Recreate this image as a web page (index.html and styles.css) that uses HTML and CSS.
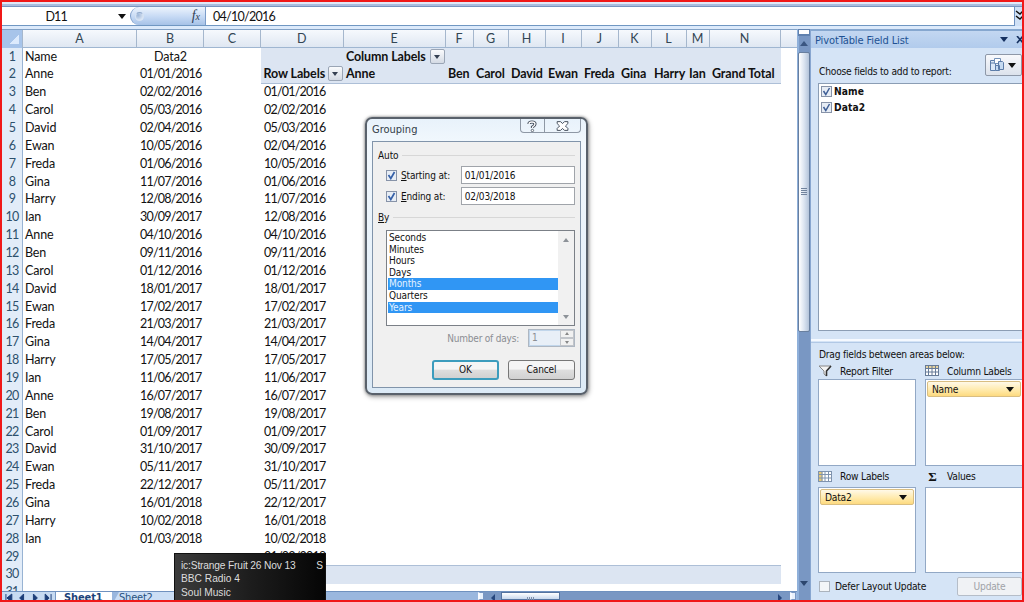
FILE: index.html
```html
<!DOCTYPE html>
<html lang="en">
<head>
<meta charset="utf-8">
<title>PivotTable Grouping</title>
<link rel="stylesheet" href="styles.css">
</head>
<body>
<div class="window">
  <div class="formula-bar">
    <div class="name-box"><span>D11</span><i class="caret"></i></div>
    <div class="fx"><i class="knob"></i><span class="fx-label">f<small>x</small></span></div>
    <div class="formula">04/10/2016</div>
    <div class="expand"><svg width="7" height="12" viewBox="0 0 7 12"><path d="M1 1l4 3 3-3M1 6l4 3 3-3" fill="none" stroke="#111" stroke-width="1.4"/></svg></div>
  </div>
  <div class="main">
    <div class="sheet">
      <div class="cols head"><b class="corner"></b><b>A</b><b>B</b><b>C</b><b>D</b><b>E</b><b>F</b><b>G</b><b>H</b><b>I</b><b>J</b><b>K</b><b>L</b><b>M</b><b>N</b><b></b></div>
      <div class="grid">
        <div class="cols row"><b>1</b><span>Name</span><span class="mid">Data2</span><span></span><div class="band top"><span></span><span class="wide">Column Labels</span><i class="filter f1"></i></div></div>
        <div class="cols row"><b>2</b><span>Anne</span><span class="date">01/01/2016</span><span></span><div class="band bottom"><span>Row Labels</span><span>Anne</span><span>Ben</span><span>Carol</span><span>David</span><span>Ewan</span><span>Freda</span><span>Gina</span><span>Harry</span><span>Ian</span><span>Grand Total</span><i class="filter f2"></i></div></div>
        <div class="cols row"><b>3</b><span>Ben</span><span class="date">02/02/2016</span><span></span><span class="date">01/01/2016</span></div>
        <div class="cols row"><b>4</b><span>Carol</span><span class="date">05/03/2016</span><span></span><span class="date">02/02/2016</span></div>
        <div class="cols row"><b>5</b><span>David</span><span class="date">02/04/2016</span><span></span><span class="date">05/03/2016</span></div>
        <div class="cols row"><b>6</b><span>Ewan</span><span class="date">10/05/2016</span><span></span><span class="date">02/04/2016</span></div>
        <div class="cols row"><b>7</b><span>Freda</span><span class="date">01/06/2016</span><span></span><span class="date">10/05/2016</span></div>
        <div class="cols row"><b>8</b><span>Gina</span><span class="date">11/07/2016</span><span></span><span class="date">01/06/2016</span></div>
        <div class="cols row"><b>9</b><span>Harry</span><span class="date">12/08/2016</span><span></span><span class="date">11/07/2016</span></div>
        <div class="cols row"><b>10</b><span>Ian</span><span class="date">30/09/2017</span><span></span><span class="date">12/08/2016</span></div>
        <div class="cols row"><b>11</b><span>Anne</span><span class="date">04/10/2016</span><span></span><span class="date">04/10/2016</span></div>
        <div class="cols row"><b>12</b><span>Ben</span><span class="date">09/11/2016</span><span></span><span class="date">09/11/2016</span></div>
        <div class="cols row"><b>13</b><span>Carol</span><span class="date">01/12/2016</span><span></span><span class="date">01/12/2016</span></div>
        <div class="cols row"><b>14</b><span>David</span><span class="date">18/01/2017</span><span></span><span class="date">18/01/2017</span></div>
        <div class="cols row"><b>15</b><span>Ewan</span><span class="date">17/02/2017</span><span></span><span class="date">17/02/2017</span></div>
        <div class="cols row"><b>16</b><span>Freda</span><span class="date">21/03/2017</span><span></span><span class="date">21/03/2017</span></div>
        <div class="cols row"><b>17</b><span>Gina</span><span class="date">14/04/2017</span><span></span><span class="date">14/04/2017</span></div>
        <div class="cols row"><b>18</b><span>Harry</span><span class="date">17/05/2017</span><span></span><span class="date">17/05/2017</span></div>
        <div class="cols row"><b>19</b><span>Ian</span><span class="date">11/06/2017</span><span></span><span class="date">11/06/2017</span></div>
        <div class="cols row"><b>20</b><span>Anne</span><span class="date">16/07/2017</span><span></span><span class="date">16/07/2017</span></div>
        <div class="cols row"><b>21</b><span>Ben</span><span class="date">19/08/2017</span><span></span><span class="date">19/08/2017</span></div>
        <div class="cols row"><b>22</b><span>Carol</span><span class="date">01/09/2017</span><span></span><span class="date">01/09/2017</span></div>
        <div class="cols row"><b>23</b><span>David</span><span class="date">31/10/2017</span><span></span><span class="date">30/09/2017</span></div>
        <div class="cols row"><b>24</b><span>Ewan</span><span class="date">05/11/2017</span><span></span><span class="date">31/10/2017</span></div>
        <div class="cols row"><b>25</b><span>Freda</span><span class="date">22/12/2017</span><span></span><span class="date">05/11/2017</span></div>
        <div class="cols row"><b>26</b><span>Gina</span><span class="date">16/01/2018</span><span></span><span class="date">22/12/2017</span></div>
        <div class="cols row"><b>27</b><span>Harry</span><span class="date">10/02/2018</span><span></span><span class="date">16/01/2018</span></div>
        <div class="cols row"><b>28</b><span>Ian</span><span class="date">01/03/2018</span><span></span><span class="date">10/02/2018</span></div>
        <div class="cols row"><b>29</b><span></span><span></span><span></span><span class="date">01/03/2018</span></div>
        <div class="cols row"><b>30</b><span></span><span></span><span></span><div class="band total"><span>Grand Total</span></div></div>
        <div class="cols row"><b>31</b></div>
      </div>
      <div class="tabs">
        <svg class="nav" width="54" height="10" viewBox="0 0 54 10"><path d="M4 2v8M10 2v8L5 6zM22 2v8l-4-4zM32 2v8l4-4zM44 2v8l4-4zM50 2v8" fill="#1c3d78" stroke="#1c3d78"/></svg>
        <span class="tab active">Sheet1</span><span class="tab">Sheet2</span>
        <div class="hscroll"><i class="split"></i><i class="tri left"></i><i class="hthumb"><em></em></i><i class="track"></i><i class="tri right"></i><i class="split end"></i></div>
      </div>
    </div>
    <div class="vscroll"><i class="vsplit"></i><i class="up"></i><i class="vthumb"><em></em></i><i class="down"></i></div>
    <div class="panel">
      <div class="panel-title"><span>PivotTable Field List</span><i class="caret"></i><svg width="8" height="8" viewBox="0 0 8 8"><path d="M1 0l6 7M7 0L1 7" stroke="#15305f" stroke-width="1.6"/></svg></div>
      <div class="choose"><span>Choose fields to add to report:</span>
        <div class="view-btn"><svg width="16" height="16" viewBox="0 0 16 16"><path d="M1.500 3.500h5v10h-5zM1.500 6h5" fill="#dce9f8" stroke="#5c7ca8"/><path d="M5.500 1.500h6v5h-6z" fill="#fff" stroke="#7290b8"/><path d="M6.500 8.500h4v5h-4zM9.500 4.500h4l1 1v7h-5z" fill="#c5daf2" stroke="#5c7ca8"/></svg><i class="caret"></i></div>
      </div>
      <div class="fields"><div><i class="check"><svg width="9" height="9" viewBox="0 0 9 9"><path d="M1.500 4l2.300 3.500L7.500 1" fill="none" stroke="#3f5f96" stroke-width="1.500"/></svg></i>Name</div><div><i class="check"><svg width="9" height="9" viewBox="0 0 9 9"><path d="M1.500 4l2.300 3.500L7.500 1" fill="none" stroke="#3f5f96" stroke-width="1.500"/></svg></i>Data2</div></div>
      <div class="divider"></div>
      <div class="drag">Drag fields between areas below:</div>
      <div class="areas">
        <div class="label"><svg width="15" height="12" viewBox="0 0 15 12"><path d="M1 1h12L8.500 6v5L6 9V6z" fill="#f4f4f4" stroke="#888"/><path d="M13 1L8.500 6v5" fill="none" stroke="#333" stroke-width="1.600"/></svg><span>Report Filter</span></div>
        <div class="label"><svg width="15" height="12" viewBox="0 0 15 12"><path d="M.5.500h13v10H.5z" fill="#fff"/><path d="M.5.500h13v3H.5z" fill="#e5d3a0"/><path d="M.5 0v11M3.500 0v11M7 0v11M10.500 0v11M13.500 0v11M0 .5h14M0 3.500h14M0 7h14M0 10.500h14" fill="none" stroke="#677b97"/></svg><span>Column Labels</span></div>
        <div class="drop"></div>
        <div class="drop"><div class="pill">Name<i class="caret"></i></div></div>
        <div class="label"><svg width="15" height="12" viewBox="0 0 15 12"><path d="M.5.500h13v10H.5z" fill="#fff"/><path d="M.5.500h4v10h-4z" fill="#e5c878"/><path d="M.5 0v11M4 0v11M7 0v11M10.500 0v11M13.500 0v11M0 .5h14M0 3.500h14M0 7h14M0 10.500h14" fill="none" stroke="#7f93ae"/></svg><span>Row Labels</span></div>
        <div class="label"><span class="sigma">Σ</span><span>Values</span></div>
        <div class="drop"><div class="pill">Data2<i class="caret"></i></div></div>
        <div class="drop"></div>
      </div>
      <div class="defer"><i class="check"></i><span>Defer Layout Update</span><div class="update">Update</div></div>
    </div>
  </div>

  <div class="dialog">
    <div class="dialog-title"><span>Grouping</span>
      <div class="controls"><svg width="23" height="15" viewBox="0 0 23 15"><path d="M8 5q0-2 3-2 3 0 3 2 0 1.500-2.500 3v1" fill="none" stroke="#444e5c" stroke-width="3.200"/><path d="M8 5q0-2 3-2 3 0 3 2 0 1.500-2.500 3v1" fill="none" stroke="#fff" stroke-width="1.300"/><circle cx="11.400" cy="11.500" r="1.200" fill="#fff" stroke="#444e5c" stroke-width=".8"/></svg><svg width="38" height="15" viewBox="0 0 38 15"><path d="M12.500 2.500h3.500l2 2 2-2h3.500v2L21 7l2.500 2.500v2H20l-2-2-2 2h-3.500v-2L15 7l-2.500-2.500z" fill="#fff" stroke="#444e5c"/></svg></div>
    </div>
    <div class="dialog-body">
      <div class="legend"><span>Auto</span><hr></div>
      <div class="pair"><i class="check"><svg width="9" height="9" viewBox="0 0 9 9"><path d="M1.500 4l2.300 3.500L7.500 1" fill="none" stroke="#3560a8" stroke-width="1.700"/></svg></i><label><u>S</u>tarting at:</label><div class="input">01/01/2016</div></div>
      <div class="pair"><i class="check"><svg width="9" height="9" viewBox="0 0 9 9"><path d="M1.500 4l2.300 3.500L7.500 1" fill="none" stroke="#3560a8" stroke-width="1.700"/></svg></i><label><u>E</u>nding at:</label><div class="input">02/03/2018</div></div>
      <div class="legend by"><span><u>B</u>y</span><hr></div>
      <div class="list"><div class="options"><span>Seconds</span><span>Minutes</span><span>Hours</span><span>Days</span><span class="on">Months</span><span>Quarters</span><span class="on">Years</span></div><div class="list-bar"><i></i><i></i></div></div>
      <div class="days"><span>Number of days:</span><div class="spin"><span>1</span><div class="arrows"><i></i><i></i></div></div></div>
      <div class="buttons"><div class="btn ok">OK</div><div class="btn">Cancel</div></div>
    </div>
  </div>

  <div class="radio"><div><span class="clip">ic:Strange Fruit 26 Nov 13</span><span>S</span></div><div>BBC Radio 4</div><div>Soul Music</div></div>
</div>
</body>
</html>
```
FILE: styles.css
```css
* { box-sizing: border-box; }
body { margin: 0; overflow: hidden; }
i, em { font-style: normal; display: block; flex: none; }
svg { display: block; flex: none; }
.window { position: relative; width: 1024px; height: 602px; border: 2px solid #f01818; background: #cfe0f5; overflow: hidden; display: flex; flex-direction: column; font: 12.5px Lato, "Open Sans", sans-serif; color: #111; }
.caret { width: 0; height: 0; border: 4px solid transparent; border-top: 5px solid #111; border-bottom: 0; }

.formula-bar { display: flex; height: 27px; padding: 5px 0 3px; flex: none; background: linear-gradient(#dfe9f8 0 2px, #aabedf 2px 4px, #7895c0 4px 5px, #fff 5px 23px, #7097c2 23px 24px, #dceafb 24px); }
.name-box { width: 128px; display: flex; align-items: center; justify-content: flex-end; padding-right: 4px; gap: 51px; }
.name-box span { letter-spacing: -.8px; }
.fx { width: 76px; height: 18px; display: flex; justify-content: space-between; align-items: center; border-right: 1px solid #7b9cc9; border-radius: 9px 0 0 9px; background: linear-gradient(#edf4fd, #c5d9f4 55%, #a6c2e7); padding: 0 5px 0 4px; border-left: 1px solid #7b9cc9; }
.knob { width: 9px; height: 9px; border-radius: 50%; background: radial-gradient(circle at 30% 30%, #9db6d8, #edf4fd); border: 1px solid #d7e3f2; border-top-color: #90a9cb; }
.fx-label { font: italic 14px "Liberation Serif", serif; color: #303c52; }
.fx-label small { font-size: 10px; }
.formula { flex: 1; padding: 1px 0 0 7px; line-height: 17px; letter-spacing: -.72px; }
.expand { width: 8px; border-left: 1px solid #6d90c0; background: #cfe0f5; padding-top: 3px; }

.main { display: flex; flex: 1; min-height: 0; }
.sheet { width: 795px; display: flex; flex-direction: column; background: #fff; }
.cols { display: grid; grid-template-columns: 21px 114px 67px 57px 82.500px 102px 28px 35px 37px 36px 37px 33px 35px 23px 71px 1fr; }
.head { height: 18.500px; flex: none; border-top: 1px solid #82a1c5; border-bottom: 1px solid #9fb6d1; background: linear-gradient(#f6f9fd, #dfe7f2); }
.head b { font-weight: normal; font-size: 12.500px; line-height: 18px; text-align: center; color: #334654; border-right: 1px solid #a5b7cd; }
.head b:last-child { border: 0; }
.head .corner { background: linear-gradient(135deg, transparent 63%, #dceafd 64%) 3px 3px / 14px 11px no-repeat #a7c4ea; }
.grid { height: 543.500px; overflow: hidden; flex: none; }
.row { height: 17.860px; line-height: 18px; white-space: nowrap; }
.row > b { font-weight: normal; text-align: center; color: #2d506c; background: #e2ecf8; border-right: 1px solid #98b3d3; border-bottom: 1px solid #a4bbd7; letter-spacing: -.75px; }
.row span { padding-left: 2px; letter-spacing: -.12px; }
.row .date { padding-left: 3px; letter-spacing: -.78px; }
.row .mid { text-align: center; padding: 0; }
.band { position: relative; grid-column: 5 / 16; background: #dce5f2; display: grid; grid-template-columns: 82.500px 102px 28px 35px 37px 36px 37px 33px 35px 23px 71px; font-weight: bold; }
.band span { letter-spacing: -.12px; padding-left: 2.500px; }
.band .wide { grid-column: 2 / 4; }
.bottom { border-bottom: 1px solid #adbfd7; }
.total { border-top: 1px solid #adbfd7; }
.filter { position: absolute; top: 1px; width: 15px; height: 15px; border: 1px solid #9aa5b5; border-radius: 2px; background: linear-gradient(#fafbfd, #d4dae4); }
.filter::after { content: ""; position: absolute; left: 3px; top: 5px; border: 3.500px solid transparent; border-top: 4px solid #354052; border-bottom: 0; }
.f1 { left: 169px; }
.f2 { left: 67px; }

.tabs { flex: 1; display: flex; background: #9ab7de; border-top: 1px solid #6f91bf; overflow: hidden; font: 11px/12px "DejaVu Sans Condensed", "DejaVu Sans", sans-serif; color: #28527f; }
.nav { background: #c6daf2; border-right: 1px solid #7697c4; }
.tab { width: 62px; flex: none; background: #cbdef5; padding-left: 7px; height: 13px; clip-path: polygon(7px 0, 100% 0, 100% 100%, 0 100%); letter-spacing: -.2px; }
.active { width: 56px; background: #fff; font-weight: bold; color: #1d4379; clip-path: none; letter-spacing: -.1px; padding-left: 8px; }
.hscroll { margin-left: auto; width: 318px; margin-right: 1px; display: flex; background: #7997c3; }
.split { width: 6px; background: #e9f1fc; border: 1px solid #7997c3; border-left: 2px solid #f7faff; }
.tri { width: 0; height: 0; margin-top: 2px; border: 4px solid transparent; }
.left { border-right-color: #27477d; margin-left: 3px; }
.right { border-left-color: #27477d; margin-right: 4px; }
.hthumb { width: 59px; margin-left: 6px; background: linear-gradient(#fff, #c9d8ed); border: 1px solid #54739f; padding: 4px 0 0 25px; }
.hthumb em { width: 8px; height: 6px; background: repeating-linear-gradient(90deg, #7e8fa9 0 1px, transparent 1px 2px); }
.track { flex: 1; }

.vscroll { width: 14px; flex: none; background: linear-gradient(90deg, #8fb0da 0 2px, #7997c3 2px); display: flex; flex-direction: column; align-items: center; border-right: 1px solid #88a6d0; }
.vsplit { width: 12px; height: 7px; background: #fff; border: 1px solid #6081ae; border-bottom-width: 2px; }
.up { border: 4px solid transparent; border-bottom: 5px solid #3a5681; border-top: 0; margin: 5px 0 6px; }
.vthumb { width: 12px; height: 280px; border: 1px solid #687f9f; border-radius: 2px; background: linear-gradient(90deg, #fff, #dce5f1 50%, #b4c4da); padding: 135px 0 0 2px; }
.vthumb em { width: 6px; height: 7px; background: repeating-linear-gradient(#71839d 0 1px, transparent 1px 2px); }
.down { border: 4px solid transparent; border-top: 5px solid #2c466e; border-bottom: 0; margin-top: auto; margin-bottom: 14px; }

.panel { flex: 1; background: #d5e4f6; font: 10.200px "DejaVu Sans Condensed", "DejaVu Sans", sans-serif; overflow: hidden; white-space: nowrap; border-top: 2px solid #86a7cf; letter-spacing: -.23px; }
.panel-title { height: 17px; background: linear-gradient(#c3d7f1, #b1cbec); display: flex; align-items: center; gap: 8px; padding-left: 4px; color: #225293; font-size: 11px; letter-spacing: -.12px; }
.panel-title span { padding-top: 1px; }
.panel-title .caret { margin-left: auto; border-top-color: #15305f; }
.panel-title svg { margin-right: -2px; }
.choose { height: 35px; display: flex; justify-content: space-between; padding-left: 8px; }
.choose > span { padding-top: 18px; }
.view-btn { width: 37px; height: 22px; margin-top: 6px; border: 1px solid #8e98a8; border-radius: 2px; background: linear-gradient(#f8f9fc, #dce2ec); display: flex; align-items: center; gap: 3px; padding-left: 3px; }
.fields { height: 248px; margin-left: 7px; background: #fff; border: 1px solid #8b9db4; border-right: 0; padding-left: 2px; font-weight: bold; letter-spacing: .1px; }
.fields > div { display: flex; gap: 2px; align-items: center; height: 16px; line-height: 12px; padding-bottom: 1px; }
.check { width: 11px; height: 11px; border: 1px solid #8793a8; background: #e7edf5; }
.divider { height: 4px; margin-top: 8px; border-top: 2px solid #f5f9ff; border-bottom: 1px solid #b1c8e5; }
.drag { padding: 6px 0 0 8px; height: 20px; line-height: 12px; }
.areas { display: grid; grid-template-columns: 98px 98px; grid-template-rows: 16px 87px 21px 86px; column-gap: 9px; padding-left: 7px; }
.label { display: flex; align-items: center; gap: 7px; }
.sigma { width: 15px; text-align: center; font: bold 13px "Liberation Serif", serif; }
.drop { border: 1px solid #92a8c5; background: #fff; padding: 1px; }
.pill { height: 16px; border: 1px solid #d9be82; border-radius: 2px; background: linear-gradient(#fff9e8, #ffe9a8 60%, #fdda80); padding: 0 6px 0 4px; display: flex; align-items: center; justify-content: space-between; }
.defer { display: flex; height: 24px; align-items: center; gap: 5px; padding-left: 8px; padding-top: 2px; }
.defer .check { background: #f3f6f9; border-color: #abb3bd; }
.update { margin-left: auto; width: 65px; height: 19px; border: 1px solid #b5bdc8; border-radius: 2px; text-align: center; line-height: 18px; color: #a0a3a8; background: #f0f2f5; }

.dialog { position: absolute; left: 363px; top: 115px; width: 223px; height: 278px; border: 2px solid #59616b; border-radius: 7px; background: linear-gradient(#e8f2fb, #f2f8fd 25px, #dceaf6); box-shadow: 0 0 3px #777, 1px 2px 5px #aaa; padding: 0 5px 5px; display: flex; flex-direction: column; font: 10px "DejaVu Sans Condensed", "DejaVu Sans", sans-serif; letter-spacing: -.1px; white-space: nowrap; }
.dialog-title { height: 22px; flex: none; display: flex; justify-content: space-between; font-size: 11px; color: #333d49; }
.dialog-title > span { padding: 4px 0 0; letter-spacing: 0; }
.controls { display: flex; height: 14px; width: 61px; border: 1px solid #8e98a5; border-top: 0; border-radius: 0 0 4px 4px; overflow: hidden; }
.controls svg + svg { border-left: 1px solid #8e98a5; }
.dialog-body { flex: 1; border: 1px solid #8194aa; background: #f0f0f0; padding: 6px 5px 0 5px; }
.legend { display: flex; gap: 4px; align-items: center; height: 14px; }
.legend hr { flex: 1; border: 0; border-top: 1px solid #d7d7d7; margin: 0; }
.pair { display: flex; align-items: center; height: 18px; margin: 4px 0 0 8px; }
.pair + .pair { margin-top: 3px; }
.pair label { margin-left: 4px; width: 60px; letter-spacing: -.15px; }
.input { width: 115px; height: 18px; border: 1px solid #a0a4aa; background: #fff; line-height: 17px; padding-left: 3px; letter-spacing: -.1px; }
.legend.by { margin-top: 6px; height: 13px; }
.list { margin: 6px 0 0 8px; height: 96px; border: 1px solid #7b8087; background: #fff; display: flex; }
.options { flex: 1; padding: 1px 0 0 1px; display: flex; flex-direction: column; }
.options span { height: 11.600px; line-height: 11.600px; padding-left: 1px; letter-spacing: -.1px; }
.options .on { background: #3096f4; color: #e5f2ff; }
.list-bar { width: 16px; background: #f1f1f1; display: flex; flex-direction: column; justify-content: space-between; align-items: center; padding: 7px 0 6px; }
.list-bar i { border: 3px solid transparent; border-top: 4px solid #8d9298; border-bottom: 0; }
.list-bar i:first-child { transform: scaleY(-1); }
.days { display: flex; justify-content: flex-end; align-items: center; gap: 9px; margin-top: 3px; height: 18px; color: #8b8e93; letter-spacing: -.2px; }
.spin { width: 47px; height: 18px; border: 1px solid #aeb7c2; background: #e8eff7; display: flex; justify-content: space-between; line-height: 16px; padding-left: 3px; box-shadow: inset 0 0 0 1px #c1d6eb; }
.arrows { width: 14px; display: flex; flex-direction: column; }
.arrows i { height: 8px; border: 1px solid #c2c5ca; background: #f1f1f1; padding: 2px 4px; }
.arrows i::after { content: ""; display: block; border: 2px solid transparent; border-top: 3px solid #888; border-bottom: 0; }
.arrows i:first-child { transform: scaleY(-1); }
.buttons { display: flex; justify-content: flex-end; gap: 9px; margin-top: 13px; }
.btn { width: 67px; height: 20px; border: 1px solid #777; border-radius: 3px; background: linear-gradient(#f5f5f5 45%, #dedede 50%, #d1d1d1); text-align: center; line-height: 18px; }
.ok { border: 2px solid #3c9cbd; line-height: 16px; }

.radio { position: absolute; left: 172px; top: 551px; width: 152px; height: 48px; padding: 5px 2px 0 6px; background: linear-gradient(90deg, #3b3b3b, #1d1d1d 50%, #050505); border: 1px solid #111; color: #ddd; font: 10.200px/13.400px "Liberation Sans", Arial, sans-serif; }
.radio > div { display: flex; justify-content: space-between; white-space: nowrap; }
.radio .clip { width: 118px; letter-spacing: -.15px; }
```
